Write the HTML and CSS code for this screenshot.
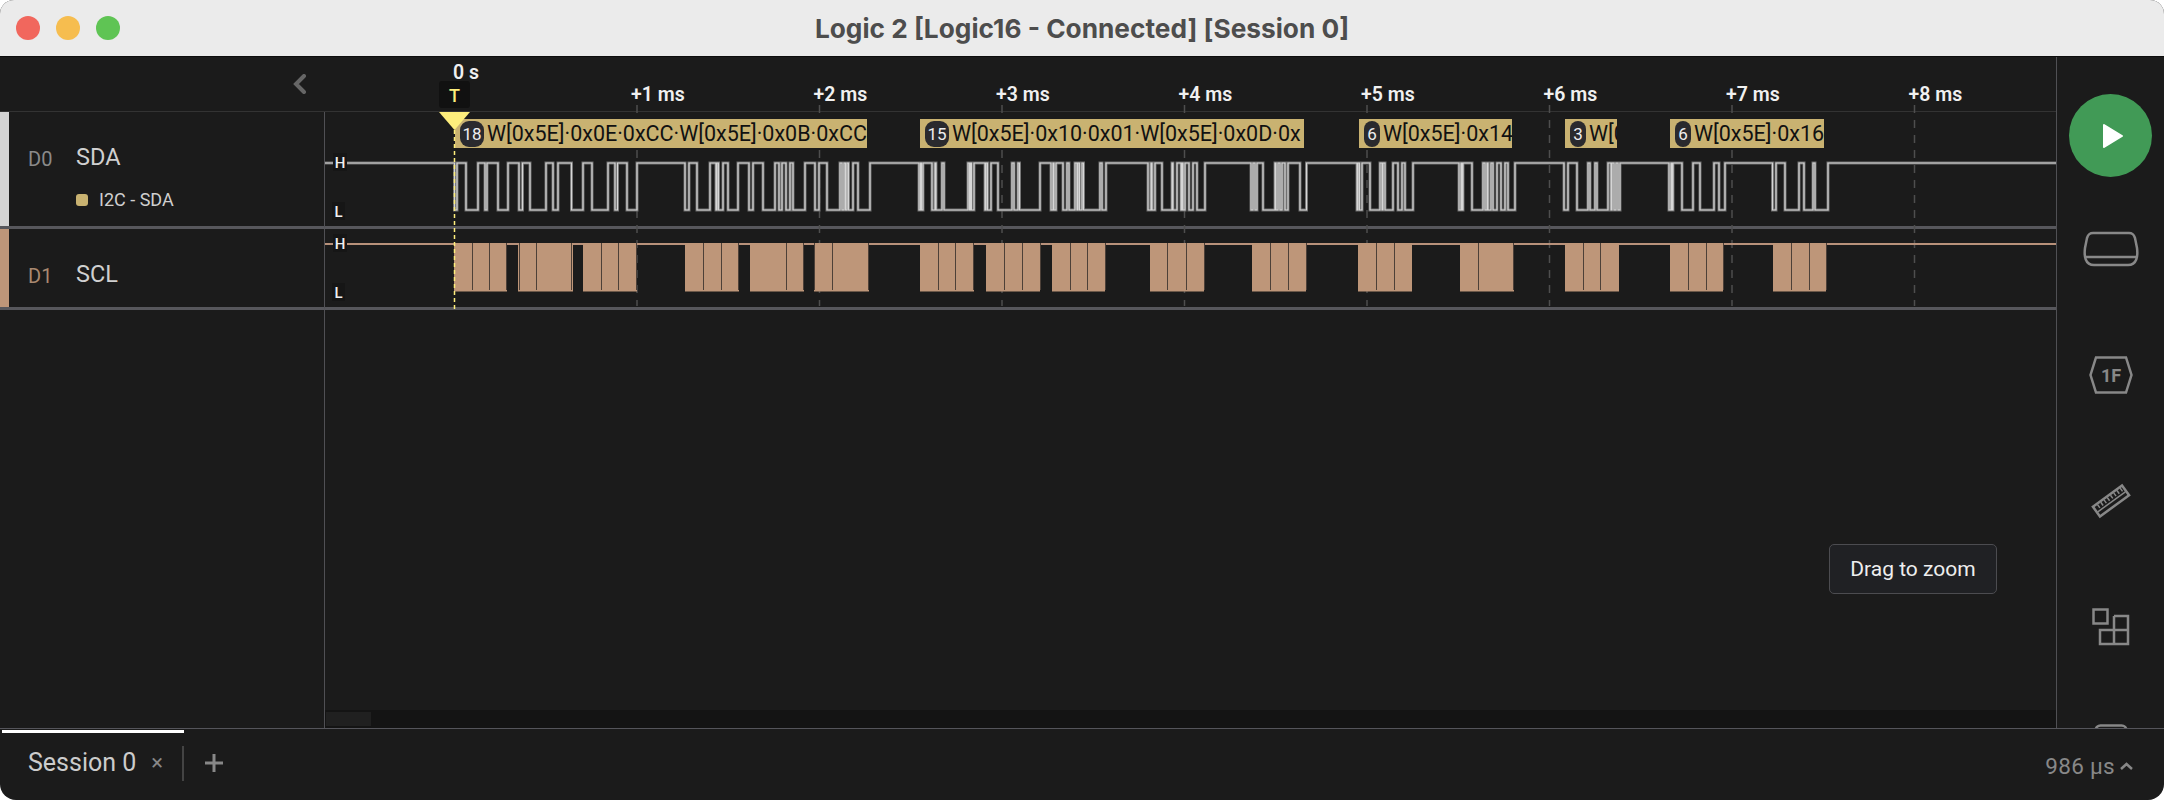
FILE: index.html
```html
<!DOCTYPE html>
<html lang="en">
  <head>
    <meta charset="UTF-8" />
    <title>Logic 2 [Logic16 - Connected] [Session 0]</title>
    <link rel="stylesheet" href="styles.css">
  </head>
  <body>
    <div class="window">
      <header class="titlebar">
        <div class="lights">
          <span class="light lightRed"></span>
          <span class="light lightYellow"></span>
          <span class="light lightGreen"></span>
        </div>
        <h1 class="title">Logic 2 [Logic16 - Connected] [Session 0]</h1>
      </header>

      <div class="main">
        <aside class="sidebar">
          <div class="rowRuler sidebarHead">
            <svg class="collapse" width="14" height="20" viewBox="0 0 14 20"><path d="M11 2 L3 10 L11 18" /></svg>
          </div>
          <section class="rowSda channel">
            <div class="strip stripSda"></div>
            <div class="channelBody">
              <div class="channelHead">
                <span class="channelId">D0</span>
                <span class="channelName">SDA</span>
              </div>
              <div class="analyzer"><span class="analyzerDot"></span>I2C - SDA</div>
            </div>
          </section>
          <section class="rowScl channel">
            <div class="strip stripScl"></div>
            <div class="channelBody">
              <div class="channelHead">
                <span class="channelId channelIdScl">D1</span>
                <span class="channelName">SCL</span>
              </div>
            </div>
          </section>
          <div class="sidebarRest"></div>
        </aside>

        <div class="plot">
          <div class="rowRuler ruler">
            <span class="tick">+1 ms</span>
            <span class="tick">+2 ms</span>
            <span class="tick">+3 ms</span>
            <span class="tick">+4 ms</span>
            <span class="tick">+5 ms</span>
            <span class="tick">+6 ms</span>
            <span class="tick">+7 ms</span>
            <span class="tick">+8 ms</span>
          </div>
          <div class="rowSda plotRow"></div>
          <div class="rowScl plotRow"></div>
          <div class="plotEmpty">
            <div class="scrollbar"><div class="scrollThumb"></div></div>
          </div>

          <svg class="canvas" viewBox="325 57 1731 254">
            <path class="gridLines" d="M637 105V306M819.5 105V306M1002 105V306M1184.5 105V306M1367 105V306M1549.5 105V306M1732 105V306M1914.5 105V306" />
          </svg>

          <div class="bubbles">
            <div class="bubble" style="margin-left:130px;width:412px"><span class="count">18</span>W[0x5E]·0x0E·0xCC·W[0x5E]·0x0B·0xCC</div>
            <div class="bubble" style="margin-left:53px;width:384px"><span class="count">15</span>W[0x5E]·0x10·0x01·W[0x5E]·0x0D·0x</div>
            <div class="bubble" style="margin-left:55px;width:153px"><span class="count countSmall">6</span>W[0x5E]·0x14</div>
            <div class="bubble" style="margin-left:53px;width:52px"><span class="count countSmall">3</span>W[0</div>
            <div class="bubble" style="margin-left:53px;width:154px"><span class="count countSmall">6</span>W[0x5E]·0x16</div>
          </div>

          <svg class="canvas" viewBox="325 57 1731 254">
            <defs>
              <path id="sdaWave" d="M325 163
              H454.5V210H457V163H466V210H478V163H485V210H487V163H498V210H508V163H519V210H522.5V163H530V210H546V163H553V210H558V163H571.5V210H583V163H592V210H608V163H615V210H617.5V163H627V210H637V163
              H685V210H689V163H697V210H710V163H716V210H717V163H718.5V210H723V163H728V210H738V163H749V210H753V163H763V210H775V163H779V210H782V163H786V210H790V163H793V210H805V163H815V210H819V163H827V210H840V163H842V210H844V163H845.5V210H847V163H848.5V210H853V163H858V210H870V163
              H919V210H920.5V163H921.5V210H923V163H932V210H935V163H936V210H942V163H944V210H968V163H969.5V210H970.5V163H971.5V210H974V163H985V210H986V163H987.5V210H991V163H998V210H1012V163H1014V210H1018V163H1019.5V210H1040V163H1051V210H1053V163H1054V210H1056V163H1063V210H1067V163H1069V210H1075V163H1077V210H1078V163H1079.5V210H1082V163H1083.5V210H1100V163H1102V210H1106V163
              H1148V210H1151V163H1152V210H1155V163H1162V210H1172V163H1173V210H1177V163H1181V210H1182V163H1183V210H1185V163H1189V210H1193V163H1197V210H1205V163
              H1251V210H1253V163H1255V210H1257V163H1263V210H1275V163H1276V210H1278V163H1280V210H1282V163H1285V210H1288V163H1300V210H1306.5V163
              H1357V210H1358V163H1359.5V210H1362V163H1370V210H1380V163H1382V210H1383V163H1385V210H1393V163H1398V210H1402V163H1405V210H1413V163
              H1459V210H1461V163H1462V210H1463V163H1472V210H1483V163H1485V210H1487V163H1488V210H1491V163H1493V210H1497V163H1501V210H1505V163H1508V210H1515V163
              H1564V210H1568V163H1577V210H1588V163H1590V210H1595V163H1597V210H1608V163H1611V210H1612V163H1614V210H1616V163H1618V210H1620V163
              H1669V210H1671V163H1672V210H1673V163H1682V210H1693V163H1700V210H1714V163H1719V210H1725V163
              H1772.5V210H1776V163H1785V210H1799V163H1804V210H1813V163H1815V210H1828V163H2056" />
            </defs>

            <!-- SDA -->
            <use class="sdaGlow" href="#sdaWave" />
            <use class="sda" href="#sdaWave" />

            <!-- SCL -->
            <path class="sclHigh" d="M325 244H2056" />
            <g class="sclBlocks">
              <rect x="454" y="243" width="53" height="48.5" />
              <rect x="518" y="243" width="55" height="48.5" />
              <rect x="583" y="243" width="54" height="48.5" />
              <rect x="685" y="243" width="54" height="48.5" />
              <rect x="750" y="243" width="54" height="48.5" />
              <rect x="814" y="243" width="55" height="48.5" />
              <rect x="920" y="243" width="54" height="48.5" />
              <rect x="986" y="243" width="54" height="48.5" />
              <rect x="1052" y="243" width="53" height="48.5" />
              <rect x="1150" y="243" width="54" height="48.5" />
              <rect x="1252" y="243" width="54" height="48.5" />
              <rect x="1358" y="243" width="54" height="48.5" />
              <rect x="1460" y="243" width="54" height="48.5" />
              <rect x="1565" y="243" width="54" height="48.5" />
              <rect x="1670" y="243" width="53" height="48.5" />
              <rect x="1773" y="243" width="53" height="48.5" />
            </g>
            <path class="sclEdges" d="M472.5 243V290M489.5 243V290M506.5 243V290M519.5 243V290M536.5 243V290M571.5 243V290M601.5 243V290M618.5 243V290M636.5 243V290M703.5 243V290M721.5 243V290M738.5 243V290M786.5 243V290M803.5 243V290M814.5 243V290M832.5 243V290M868.5 243V290M938.5 243V290M955.5 243V290M973.5 243V290M1004.5 243V290M1022.5 243V290M1040.5 243V290M1070.5 243V290M1087.5 243V290M1105.5 243V290M1167.5 243V290M1186.5 243V290M1204.5 243V290M1270.5 243V290M1288.5 243V290M1306.5 243V290M1376.5 243V290M1394.5 243V290M1478.5 243V290M1513.5 243V290M1583.5 243V290M1600.5 243V290M1688.5 243V290M1706.5 243V290M1723.5 243V290M1791.5 243V290M1809.5 243V290M1826.5 243V290" />

            <!-- levels -->
            <g class="levels">
              <rect x="333" y="153" width="14" height="18" />
              <rect x="332" y="202" width="13" height="18" />
              <rect x="333" y="234" width="14" height="18" />
              <rect x="332" y="283" width="13" height="18" />
              <text x="340" y="167.5">H</text>
              <text x="338.5" y="216.5">L</text>
              <text x="340" y="248.5">H</text>
              <text x="338.5" y="297.5">L</text>
            </g>

            <!-- trigger -->
            <path class="triggerLine" d="M454.5 130V310" />
            <path class="triggerHead" d="M439 112H470L454.5 130Z" />
          </svg>

          <div class="zero">0 s</div>
          <div class="trigger">T</div>
          <div class="tooltip">Drag to zoom</div>
        </div>

        <nav class="toolbar">
          <button class="play"><svg width="24" height="28" viewBox="0 0 24 28"><path d="M3 3 L21 14 L3 25 Z" /></svg></button>
          <div class="tool">
            <svg width="56" height="36" viewBox="0 0 56 36"><path d="M10 2H46C50 2 51 4 52 7L54 17C55 25 54 34 45 34H11C2 34 1 25 2 17L4 7C5 4 6 2 10 2Z" /><path d="M3 26H53" /></svg>
          </div>
          <div class="tool">
            <svg width="44" height="38" viewBox="0 0 44 38"><path d="M7 1.5H37L42.5 19L37 36.5H7L1.5 19Z" /><text x="22" y="25.5">1F</text></svg>
          </div>
          <div class="tool">
            <svg width="40" height="38" viewBox="0 0 40 38"><g transform="rotate(-36 20 19)"><rect x="2" y="13" width="36" height="12" /><path class="rulerMarks" d="M3 20H37M7 14V18M11 14V18M15 14V18M19 14V18M23 14V18M27 14V18M31 14V18M35 14V18" /></g></svg>
          </div>
          <div class="tool">
            <svg width="38" height="38" viewBox="0 0 38 38"><rect x="1.5" y="1.5" width="14" height="14" /><path d="M22 8H36V36H8V22H36M22 8V36" /></svg>
          </div>
          <div class="tool">
            <svg width="34" height="58" viewBox="0 0 34 58"><rect x="1.5" y="1.5" width="31" height="55" rx="5" /></svg>
          </div>
        </nav>
      </div>

      <footer class="tabbar">
        <div class="tab">Session 0<span class="tabClose">×</span></div>
        <svg class="tabAdd" width="18" height="18" viewBox="0 0 18 18"><path d="M9 0V18M0 9H18" /></svg>
        <div class="status">986 µs
          <svg width="13" height="8" viewBox="0 0 13 8"><path d="M1 7L6.5 2L12 7" /></svg>
        </div>
      </footer>
    </div>
  </body>
</html>
```

FILE: styles.css
```css
html, body {
  margin: 0;
  background: #fff;
  font-family: Roboto, sans-serif;
}
.window {
  display: flex;
  flex-direction: column;
  height: 800px;
  overflow: hidden;
  border-radius: 14px 14px 16px 16px;
  background: #1b1b1b;
}

/* title bar */
.titlebar {
  position: relative;
  display: flex;
  align-items: center;
  justify-content: center;
  flex: 0 0 56px;
  background: #ebebeb;
}
.lights {
  position: absolute;
  left: 16px;
  top: 16px;
  display: flex;
  gap: 16px;
}
.light {
  width: 24px;
  height: 24px;
  border-radius: 50%;
}
.lightRed { background: #f1675d; }
.lightYellow { background: #f6bd4f; }
.lightGreen { background: #5fc454; }
.title {
  margin: 0;
  font-family: Inter, sans-serif;
  font-size: 26.25px;
  font-weight: 700;
  color: #4d4d4d;
}

/* main area */
.main {
  display: flex;
  flex: 1;
  min-height: 0;
  border-top: 1px solid #0d0d0d;
}
.rowRuler {
  box-sizing: border-box;
  height: 55px;
  border-bottom: 1px solid #333;
}
.rowSda {
  box-sizing: border-box;
  height: 117px;
  border-bottom: 3px solid #57575c;
}
.rowScl {
  box-sizing: border-box;
  height: 81px;
  border-bottom: 3px solid #57575c;
}

/* channels */
.sidebar {
  display: flex;
  flex-direction: column;
  flex: 0 0 325px;
}
.sidebarHead {
  display: flex;
  align-items: center;
  justify-content: flex-end;
  padding-right: 18px;
}
.sidebarRest {
  flex: 1;
  border-right: 1px solid #505054;
}
.collapse path {
  fill: none;
  stroke: #666;
  stroke-width: 4;
  stroke-linecap: round;
}
.channel {
  display: flex;
  border-right: 1px solid #505054;
}
.strip {
  flex: 0 0 9px;
}
.stripSda { background: #d4d4d4; }
.stripScl { background: #be9679; }
.channelBody {
  padding: 29px 0 0 19px;
}
.channelHead {
  display: flex;
  align-items: center;
  line-height: 26px;
}
.channelId {
  width: 48px;
  margin-top: 5px;
  font-size: 20px;
  color: #8a8a8a;
}
.channelIdScl {
  color: #a98970;
}
.channelName {
  font-size: 23.5px;
  color: #d0d0d0;
}
.analyzer {
  display: flex;
  align-items: center;
  margin: 18px 0 0 48px;
  line-height: 20px;
  font-size: 18px;
  color: #cfcfcf;
}
.analyzerDot {
  width: 12px;
  height: 12px;
  margin-right: 11px;
  border-radius: 3px;
  background: #c9b271;
}

/* plot */
.plot {
  position: relative;
  display: flex;
  flex-direction: column;
  flex: 1;
  min-width: 0;
}
.ruler {
  display: flex;
  align-items: center;
  padding: 22px 0 0 306px;
}
.tick {
  flex: 0 0 182.5px;
  font-size: 19.5px;
  font-weight: 600;
  line-height: 24px;
  color: #f0f0f0;
}
.plotEmpty {
  display: flex;
  flex: 1;
  align-items: flex-end;
}
.scrollbar {
  display: flex;
  align-items: center;
  flex: 1;
  height: 18px;
  background: #141414;
}
.scrollThumb {
  width: 45px;
  height: 14px;
  margin-left: 1px;
  background: #202020;
}
.canvas {
  position: absolute;
  left: 0;
  top: 0;
  width: 1731px;
  height: 254px;
}
.gridLines {
  fill: none;
  stroke: #4e4e4e;
  stroke-width: 1.5;
  stroke-dasharray: 8 7;
}
.sdaGlow {
  fill: none;
  stroke: #6f6f6f;
  stroke-width: 3;
}
.sda {
  fill: none;
  stroke: #d6d6d6;
  stroke-width: 1.2;
}
.sclHigh {
  fill: none;
  stroke: #b8917a;
  stroke-width: 2;
}
.sclBlocks rect {
  fill: #be9679;
}
.sclEdges {
  fill: none;
  stroke: #4d4038;
  stroke-width: 1;
}
.levels rect {
  fill: #161616;
}
.levels text {
  font-size: 15px;
  font-weight: 500;
  text-anchor: middle;
  fill: #f0f0f0;
}
.triggerLine {
  fill: none;
  stroke: #fdee7c;
  stroke-width: 1.5;
  stroke-dasharray: 4 3;
}
.triggerHead {
  fill: #fdee7c;
}
.bubbles {
  position: absolute;
  left: 0;
  top: 62px;
  display: flex;
}
.bubble {
  display: flex;
  align-items: center;
  flex: none;
  box-sizing: border-box;
  height: 29px;
  padding-left: 5px;
  overflow: hidden;
  white-space: nowrap;
  font-size: 21.5px;
  color: #111;
  background: #c9b271;
}
.count {
  position: relative;
  z-index: 1;
  flex: none;
  width: 24px;
  height: 26px;
  margin-right: 3px;
  border-radius: 9px;
  line-height: 26px;
  text-align: center;
  font-size: 17px;
  color: #eee;
  background: #2a2a2e;
}
.countSmall {
  width: 16px;
}
.zero {
  position: absolute;
  left: 128px;
  top: 5px;
  font-size: 19.5px;
  font-weight: 600;
  line-height: 22px;
  color: #f0f0f0;
}
.trigger {
  position: absolute;
  left: 114px;
  top: 24px;
  width: 31px;
  height: 27px;
  border-radius: 3px;
  line-height: 30px;
  text-align: center;
  font-size: 18px;
  font-weight: 500;
  color: #fdee7c;
  background: #111;
}
.tooltip {
  position: absolute;
  left: 1504px;
  top: 487px;
  box-sizing: border-box;
  width: 168px;
  height: 50px;
  border: 1px solid #4c4c50;
  border-radius: 5px;
  line-height: 48px;
  text-align: center;
  font-size: 21px;
  color: #eee;
  background: #202124;
}

/* right toolbar */
.toolbar {
  box-sizing: border-box;
  display: flex;
  flex-direction: column;
  align-items: center;
  flex: 0 0 108px;
  height: 671px;
  padding-top: 37px;
  overflow: hidden;
  border-left: 1px solid #505054;
}
.play {
  display: flex;
  align-items: center;
  justify-content: center;
  flex: 0 0 83px;
  width: 83px;
  margin-bottom: 9px;
  padding: 0 0 0 4px;
  border: none;
  border-radius: 50%;
  background: #419a56;
}
.play path {
  fill: #fff;
  stroke: #fff;
  stroke-width: 2;
  stroke-linejoin: round;
}
.tool {
  display: flex;
  align-items: center;
  justify-content: center;
  flex: 0 0 126px;
}
.tool svg {
  fill: none;
  stroke: #888;
  stroke-width: 2.5;
}
.tool text {
  font-size: 18px;
  font-weight: 700;
  text-anchor: middle;
  fill: #888;
  stroke: none;
}
.tool .rulerMarks {
  stroke-width: 1.5;
}

/* tabs */
.tabbar {
  box-sizing: border-box;
  display: flex;
  align-items: flex-start;
  flex: 0 0 72px;
  border-top: 1px solid #55555b;
}
.tab {
  box-sizing: border-box;
  display: flex;
  align-items: center;
  width: 182px;
  height: 52px;
  margin: 1px 0 0 2px;
  padding: 10px 0 0 26px;
  border-top: 3px solid #fff;
  font-size: 25px;
  color: #ccc;
  background: linear-gradient(#444, #444) right 13px / 2px 35px no-repeat;
}
.tabClose {
  margin-left: 15px;
  font-size: 22px;
  color: #888;
}
.tabAdd {
  margin: 25px 0 0 21px;
}
.tabAdd path {
  fill: none;
  stroke: #888;
  stroke-width: 3;
}
.status {
  display: flex;
  align-items: center;
  gap: 5px;
  margin: 25px 0 0 auto;
  padding-right: 31px;
  font-size: 22.5px;
  line-height: 24px;
  letter-spacing: 0.3px;
  color: #888;
}
.status path {
  fill: none;
  stroke: #888;
  stroke-width: 2.5;
}
```
